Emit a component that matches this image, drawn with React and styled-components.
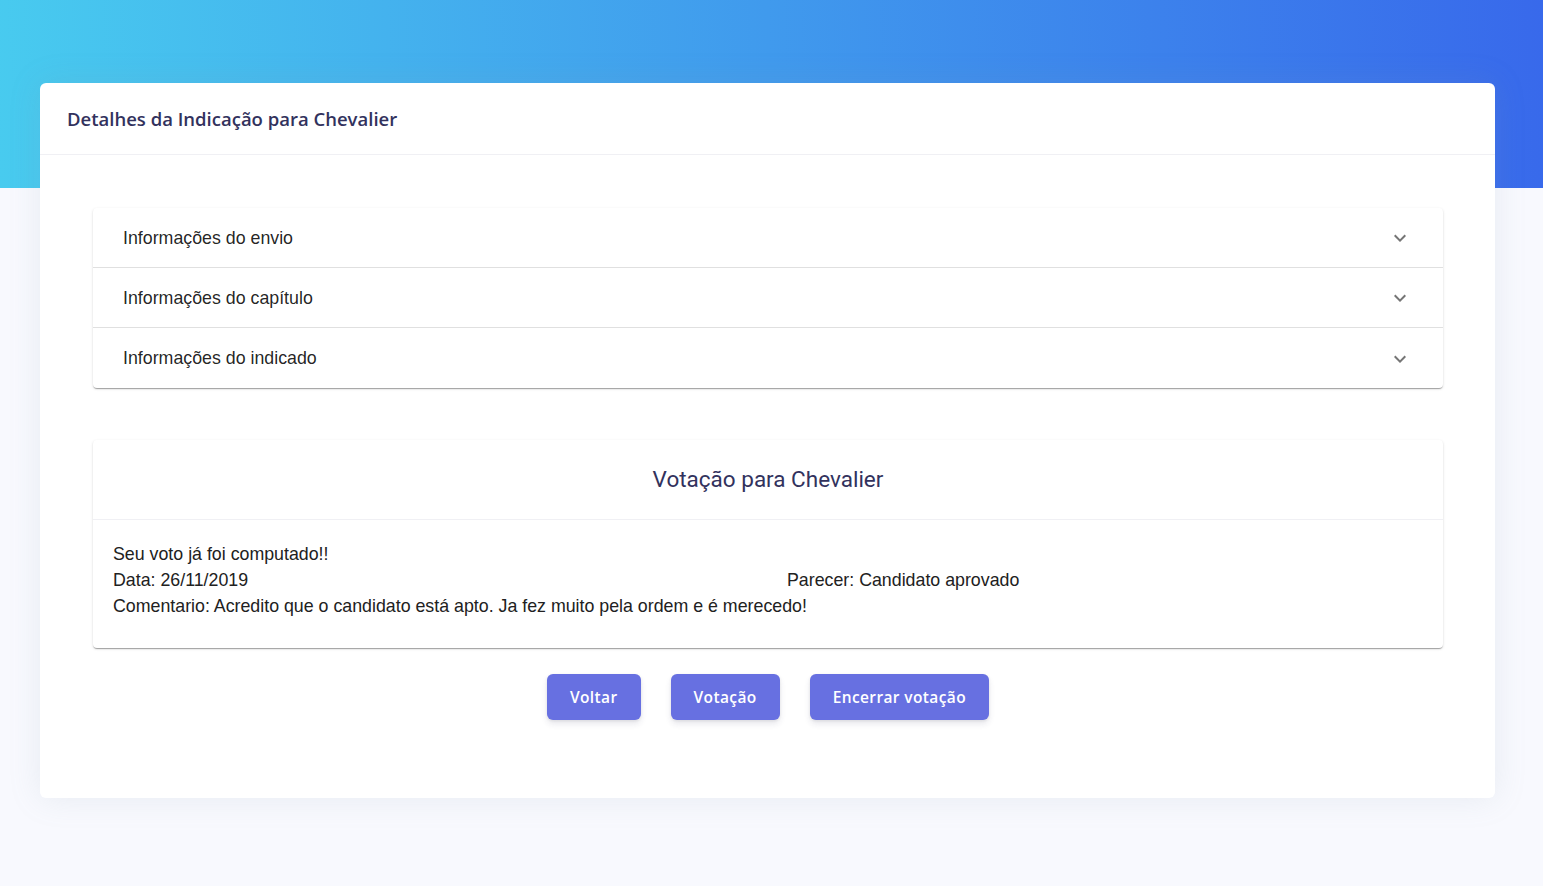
import React from "react";
import styled, { createGlobalStyle } from "styled-components";

const GlobalStyle = createGlobalStyle`
  body {
    margin: 0;
    background: #f8f9fe;
    font-family: "Open Sans", sans-serif;
  }
`;

const Page = styled.div`
  min-height: 886px;
`;

const Hero = styled.div`
  height: 188px;
  background: linear-gradient(87deg, #48cbef 0, #3869eb 100%);
`;

const Container = styled.div`
  padding: 0 48px 0 40px;
  margin-top: -105px;
`;

const Card = styled.div`
  background: #fff;
  border-radius: 6px;
  box-shadow: 0 0 2rem 0 rgba(136, 152, 170, 0.15);
`;

const CardHeader = styled.div`
  height: 71px;
  display: flex;
  align-items: center;
  padding: 0 27px;
  border-bottom: 1px solid #f0f0f4;
  h3 {
    margin: 0;
    font-size: 18.5px;
    font-weight: 600;
    color: #32325d;
  }
`;

const CardBody = styled.div`
  padding: 53px 52px 78px 53px;
`;

const Accordion = styled.div`
  border-radius: 4px;
  box-shadow: 0 2px 1px -1px rgba(0, 0, 0, 0.2), 0 1px 1px 0 rgba(0, 0, 0, 0.14),
    0 1px 3px 0 rgba(0, 0, 0, 0.12);
  background: #fff;
`;

const Row = styled.div`
  display: flex;
  align-items: center;
  justify-content: space-between;
  padding: 1px 31px 0 30px;
  font-family: "Liberation Sans", Arial, sans-serif;
  font-size: 17.8px;
  color: rgba(0, 0, 0, 0.87);
  border-top: ${(p) => (p.$first ? "none" : "1px solid rgba(0,0,0,0.12)")};
  height: ${(p) => (p.$last ? "59px" : "58px")};
`;

const VoteCard = styled.div`
  margin-top: 52px;
  background: #fff;
  border-radius: 4px;
  box-shadow: 0 2px 1px -1px rgba(0, 0, 0, 0.2), 0 1px 1px 0 rgba(0, 0, 0, 0.14),
    0 1px 3px 0 rgba(0, 0, 0, 0.12);
`;

const VoteHeader = styled.div`
  height: 80px;
  display: flex;
  align-items: center;
  justify-content: center;
  border-bottom: 1px solid #f0f0f4;
  font-family: Roboto, sans-serif;
  font-size: 22.5px;
  color: #32325d;
  padding-bottom: 2px;
  box-sizing: border-box;
`;

const VoteBody = styled.div`
  padding: 21px 20px 29px;
  font-family: "Liberation Sans", Arial, sans-serif;
  font-size: 17.8px;
  line-height: 26px;
  color: #212121;
`;

const Cols = styled.div`
  display: grid;
  grid-template-columns: 674px 1fr;
`;

const Actions = styled.div`
  display: flex;
  justify-content: center;
  gap: 30px;
  margin-top: 26px;
`;

const Button = styled.button`
  height: 46px;
  padding: 0 23px;
  border: none;
  border-radius: 6px;
  background: #6770e1;
  color: #fff;
  font-family: "Open Sans", sans-serif;
  font-weight: 600;
  font-size: 15.5px;
  letter-spacing: 0.025em;
  box-shadow: 0 4px 6px rgba(50, 50, 93, 0.11), 0 1px 3px rgba(0, 0, 0, 0.08);
  cursor: pointer;
`;

const Chevron = () => (
  <svg width="24" height="24" viewBox="0 0 24 24" fill="rgba(0,0,0,0.54)">
    <path d="M16.59 8.59 12 13.17 7.41 8.59 6 10l6 6 6-6z" />
  </svg>
);

const sections = [
  "Informações do envio",
  "Informações do capítulo",
  "Informações do indicado",
];

export default function App() {
  return (
    <Page>
      <GlobalStyle />
      <Hero />
      <Container>
        <Card>
          <CardHeader>
            <h3>Detalhes da Indicação para Chevalier</h3>
          </CardHeader>
          <CardBody>
            <Accordion>
              {sections.map((s, i) => (
                <Row
                  key={s}
                  $first={i === 0}
                  $last={i === sections.length - 1}
                >
                  <span>{s}</span>
                  <Chevron />
                </Row>
              ))}
            </Accordion>
            <VoteCard>
              <VoteHeader>Votação para Chevalier</VoteHeader>
              <VoteBody>
                <div>Seu voto já foi computado!!</div>
                <Cols>
                  <div>Data: 26/11/2019</div>
                  <div>Parecer: Candidato aprovado</div>
                </Cols>
                <div>
                  Comentario: Acredito que o candidato está apto. Ja fez muito
                  pela ordem e é merecedo!
                </div>
              </VoteBody>
            </VoteCard>
            <Actions>
              <Button>Voltar</Button>
              <Button>Votação</Button>
              <Button>Encerrar votação</Button>
            </Actions>
          </CardBody>
        </Card>
      </Container>
    </Page>
  );
}
